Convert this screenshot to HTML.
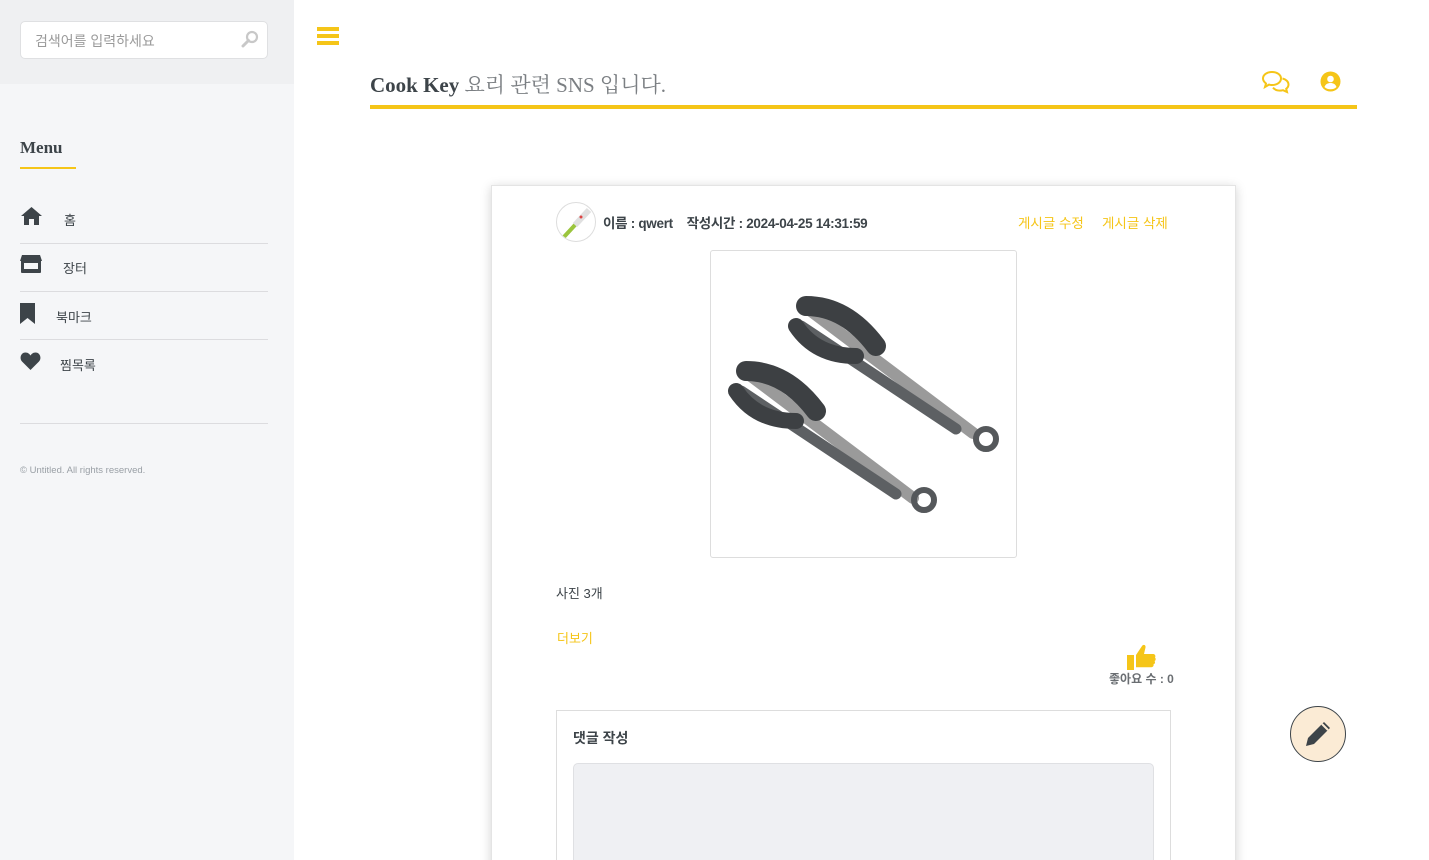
<!DOCTYPE html>
<html><head><meta charset="utf-8"><style>
*{margin:0;padding:0;box-sizing:border-box}
html,body{width:1429px;height:860px;overflow:hidden}
body{background:#fff;font-family:"Liberation Sans","Noto Sans CJK KR",sans-serif;color:#3d4449;position:relative}
.side{position:absolute;left:0;top:0;width:294px;height:860px;background:#f5f6f8}
.stop{height:84px;background:#eff0f2;padding-top:21px;padding-left:20px}
.search{width:248px;height:38px;background:#fff;border:1px solid #dfe0e2;border-radius:5px;font-size:14px;color:#9a9a9a;padding:9px 14px;position:relative}
.menu{position:absolute;left:20px;top:138px;font-family:"Liberation Serif",serif;font-weight:bold;font-size:17px;color:#3d4449}
.menu:after{content:"";position:absolute;left:0;top:29px;width:56px;height:2px;background:#f5c518}
.item{position:absolute;left:20px;width:248px;border-bottom:1px solid #dcdcdf;height:48px;font-size:13px}
.item svg{position:absolute;left:0}
.item span{position:absolute}
.a{position:absolute}
</style></head><body>
<div class="side">
<div class="stop"><div class="search">검색어를 입력하세요
<svg style="position:absolute;right:8px;top:8px" width="18" height="18" viewBox="0 0 18 18"><circle cx="11" cy="7" r="5" fill="none" stroke="#c8c8c8" stroke-width="2.2"/><path d="M7.5 10.5L2 16" stroke="#c8c8c8" stroke-width="3" stroke-linecap="round"/></svg></div></div>
<div class="menu">Menu</div>
<div class="item" style="top:196px"><svg style="top:10px" width="23" height="20" viewBox="0 0 23 20"><path d="M11.5 1L1 10h3v9h5v-6h5v6h5v-9h3z" fill="#3d4449"/></svg><span style="left:44px;top:14px">홈</span></div>
<div class="item" style="top:244px"><svg style="top:10px" width="22" height="20" viewBox="0 0 22 20"><path d="M2 1h18l2 6H0z" fill="#3d4449"/><rect x="1" y="6" width="20" height="13" rx="1" fill="#3d4449"/><rect x="4" y="9" width="14" height="6" fill="#f5f6f8"/></svg><span style="left:43px;top:14px">장터</span></div>
<div class="item" style="top:292px"><svg style="top:11px" width="16" height="21" viewBox="0 0 16 21"><path d="M0 0h15v21l-7.5-6L0 21z" fill="#3d4449"/></svg><span style="left:36px;top:15px">북마크</span></div>
<div class="item" style="top:340px;height:84px"><svg style="top:12px" width="21" height="19" viewBox="0 0 21 19"><path d="M10.5 18L2 9.5C-1 6 1 0.5 5.5 0.5c2.5 0 4 1.5 5 3 1-1.5 2.5-3 5-3C20 0.5 22 6 19 9.5z" fill="#3d4449"/></svg><span style="left:40px;top:15px">찜목록</span></div>
<div class="a" style="left:20px;top:465px;font-size:9.5px;color:#9aa0a6">© Untitled. All rights reserved.</div>
</div>
<div class="a" style="left:317px;top:27px;width:22px;height:20px"><div style="height:4px;background:#f5c518;margin-bottom:3px"></div><div style="height:4px;background:#f5c518;margin-bottom:3px"></div><div style="height:4px;background:#f5c518"></div></div>
<div class="a" style="left:370px;top:69px;font-family:'Liberation Serif','Noto Serif CJK SC',serif;font-size:21px;color:#7b7f83"><b style="color:#3d4449">Cook Key</b> 요리 관련 SNS 입니다.</div>
<div class="a" style="left:370px;top:105px;width:987px;height:4px;background:#f5c518"></div>
<svg class="a" style="left:1262px;top:70px" width="28" height="24" viewBox="0 0 28 24"><path d="M10 2c5 0 9 2.8 9 6.5S15 15 10 15c-1 0-2-.1-3-.4L3 17l1-3.5C2.5 12.3 1 10.5 1 8.5 1 4.8 5 2 10 2z" fill="none" stroke="#f5c518" stroke-width="2"/><path d="M20.5 8.5c3.5.8 6 3.2 6 6 0 1.7-.9 3.2-2.3 4.3L25 22l-4-1.8c-1 .3-2 .4-3 .4-3 0-5.6-1.2-7-3" fill="none" stroke="#f5c518" stroke-width="2"/></svg>
<svg class="a" style="left:1320px;top:71px" width="21" height="21" viewBox="0 0 21 21"><circle cx="10.5" cy="10.5" r="10" fill="#f5c518"/><circle cx="10.5" cy="8" r="3.3" fill="#fff"/><path d="M4.5 16c1-3 3.5-4 6-4s5 1 6 4c-1.5 1.5-3.5 2.3-6 2.3s-4.5-.8-6-2.3z" fill="#fff"/></svg>
<div class="a" style="left:491px;top:185px;width:745px;height:700px;background:#fff;border:1px solid #e4e4e4;box-shadow:0 2px 10px rgba(0,0,0,.18)"></div>
<div class="a" style="left:556px;top:202px;width:40px;height:40px;border-radius:50%;border:1px solid #ddd;background:#fff;overflow:hidden"><svg width="40" height="40"><path d="M6 35L30 9" stroke="#9bc53d" stroke-width="4"/><path d="M18 22L32 7" stroke="#e0e0e0" stroke-width="6"/><circle cx="24" cy="14" r="1.5" fill="#d44"/></svg></div>
<div class="a" style="left:603px;top:212px;font-size:13.5px;font-weight:bold;color:#3d4449;letter-spacing:-0.3px">이름 : qwert &nbsp;&nbsp; 작성시간 : 2024-04-25 14:31:59</div>
<div class="a" style="left:1018px;top:212px;font-size:13.5px;color:#f5c518">게시글 수정</div>
<div class="a" style="left:1102px;top:212px;font-size:13.5px;color:#f5c518">게시글 삭제</div>
<div class="a" style="left:710px;top:250px;width:307px;height:308px;border:1px solid #ddd;border-radius:3px;background:#fff">
<svg width="305" height="306" viewBox="0 0 305 306">
<g stroke-linecap="round">
<path d="M100 60L262 182" stroke="#9a9a9a" stroke-width="12"/>
<path d="M90 75L245 178" stroke="#5d6063" stroke-width="11"/>
<path d="M95 55q40 0 70 40" stroke="#3d4043" stroke-width="20" fill="none"/><path d="M85 75q20 30 60 30" stroke="#3d4043" stroke-width="16" fill="none"/>
<circle cx="275" cy="188" r="10" fill="none" stroke="#55585b" stroke-width="6"/>
<path d="M40 125L202 247" stroke="#9a9a9a" stroke-width="12"/>
<path d="M30 140L185 243" stroke="#5d6063" stroke-width="11"/>
<path d="M35 120q40 0 70 40" stroke="#3d4043" stroke-width="20" fill="none"/><path d="M25 140q20 30 60 30" stroke="#3d4043" stroke-width="16" fill="none"/>
<circle cx="213" cy="249" r="10" fill="none" stroke="#55585b" stroke-width="6"/>
</g></svg></div>
<div class="a" style="left:556px;top:583px;font-size:13px">사진 3개</div>
<div class="a" style="left:557px;top:628px;font-size:13px;color:#f5c518">더보기</div>
<svg class="a" style="left:1126px;top:644px" width="30" height="26" viewBox="0 0 30 26"><rect x="1" y="11" width="7" height="15" fill="#f5c518"/><path d="M10 11l6-9c1.5-2 4-1 3.5 1.5L18 10h9c2 0 3 2 2 3.5 1 1 1 3-.5 3.5 1 1 .5 3-1 3.2.5 1.5-.5 3-2 3H10z" fill="#f5c518"/></svg>
<div class="a" style="left:1109px;top:670px;font-size:12px;font-weight:bold;color:#6a6e72">좋아요 수 : 0</div>
<div class="a" style="left:556px;top:710px;width:615px;height:160px;border:1px solid #ddd"></div>
<div class="a" style="left:573px;top:728px;font-size:14px;font-weight:bold;color:#3d4449">댓글 작성</div>
<div class="a" style="left:573px;top:763px;width:581px;height:110px;background:#eff0f3;border:1px solid #dfe0e3;border-radius:5px"></div>
<div class="a" style="left:1290px;top:706px;width:56px;height:56px;border-radius:50%;background:#fbebd5;border:1px solid #3d4449"></div>
<svg class="a" style="left:1300px;top:716px" width="36" height="36" viewBox="0 0 36 36"><path d="M6 30l2-8L24 6l6 6-16 16z" fill="#3d4449"/><path d="M22 8l6 6" stroke="#fbebd5" stroke-width="2"/></svg>
</body></html>
